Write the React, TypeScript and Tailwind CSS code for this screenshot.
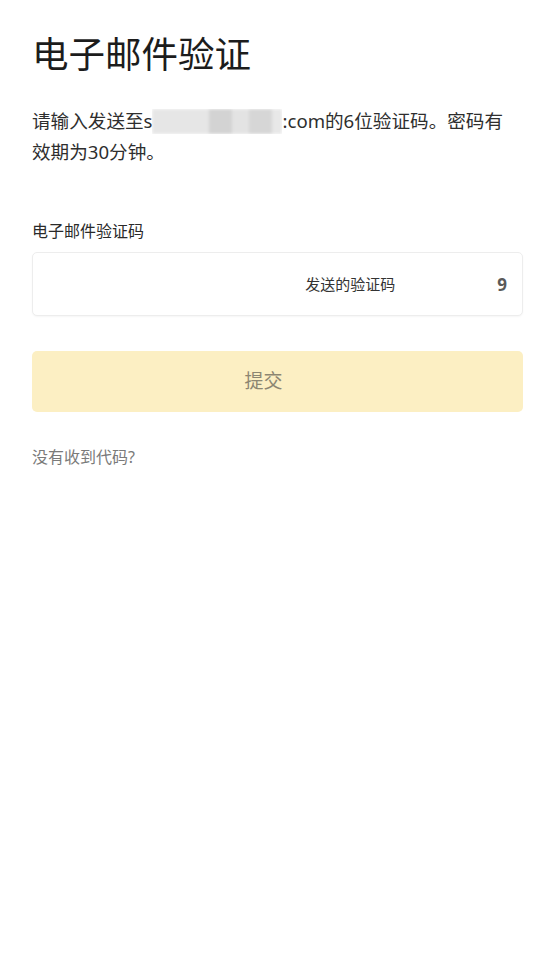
import React from "react";

const FONT = "font-['Noto_Sans','Noto_Sans_CJK_SC',sans-serif]";

function BlurredEmail() {
    // masked part of the address, as in the screenshot
    return (
        <span className="inline-flex h-[25px] w-[130px] align-[-6px] overflow-hidden">
            <span className="flex h-full w-full blur-[1.5px]">
                <span className="h-full w-[57px] bg-[#e6e6e6]" />
                <span className="h-full w-[23px] bg-[#d3d3d3]" />
                <span className="h-full w-[17px] bg-[#e3e3e3]" />
                <span className="h-full w-[23px] bg-[#d6d6d6]" />
                <span className="h-full w-[10px] bg-[#e8e8e8]" />
            </span>
        </span>
    );
}

export default function App() {
    return (
        <div className={`min-h-screen w-full bg-white pl-[32px] pr-[27px] ${FONT}`}>
            <h1 className="pt-[34px] text-[36.5px] leading-[40px] font-normal text-[#1c1c1c]">电子邮件验证</h1>

            <p className="mt-[31px] max-w-[478px] text-[18.6px] leading-[31px] text-[#2e2e2e]">
                请输入发送至s<BlurredEmail />:com的6位验证码。密码有效期为30分钟。
            </p>

            <label className="mt-[54px] block text-[16px] leading-[20px] text-[#2a2a2a]">电子邮件验证码</label>

            <div className="mt-[11px] flex h-[64px] items-center rounded-[5px] border border-[#ededed] bg-white pr-[15px] shadow-[0_1px_2px_rgba(0,0,0,0.04)]">
                <input
                    className="h-full min-w-0 flex-1 bg-transparent px-3 text-right text-[15px] outline-none placeholder:text-[#333]"
                    placeholder="发送的验证码"
                />
                <span className="ml-[90px] text-[17px] font-bold leading-none text-[#5a5a5a]">9</span>
            </div>

            <button className="mt-[35px] flex h-[61px] w-full items-center justify-center rounded-[5px] bg-[#fcefc3] pr-[28px] text-[19px] text-[#8c8672]">
                提交
            </button>

            <p className="mt-[35px] text-[16px] leading-[20px] text-[#7a7a7a]">没有收到代码?</p>
        </div>
    );
}
